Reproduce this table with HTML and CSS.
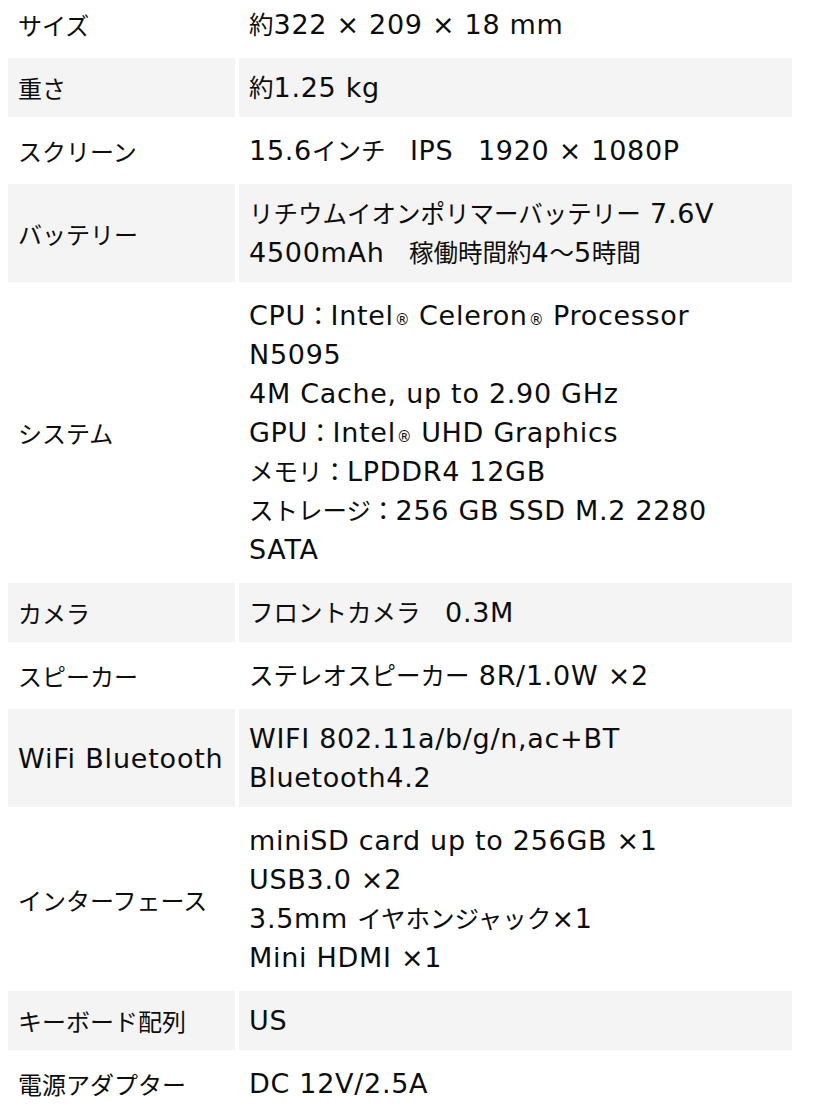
FILE: index.html
```html
<!DOCTYPE html>
<html lang="ja">
<head>
<meta charset="utf-8">
<title>仕様</title>
<link rel="stylesheet" href="styles.css">
</head>
<body>
<table class="spec">
  <colgroup><col class="c-label"><col class="c-value"></colgroup>
  <tbody>
    <tr><th>サイズ</th><td><span class="ja">約</span>322 × 209 × 18 mm</td></tr>
    <tr class="alt"><th>重さ</th><td><span class="ja">約</span>1.25 kg</td></tr>
    <tr><th>スクリーン</th><td>15.6<span class="ja">インチ　</span>IPS<span class="ja">　</span>1920 × 1080P</td></tr>
    <tr class="alt"><th>バッテリー</th><td><span class="ja">リチウムイオンポリマーバッテリー</span> 7.6V<br>4500mAh<span class="ja">　稼働時間約</span>4<span class="ja">〜</span>5<span class="ja">時間</span></td></tr>
    <tr><th>システム</th><td>CPU<span class="ja">：</span>Intel<span class="reg">®</span> Celeron<span class="reg">®</span> Processor<br>N5095<br>4M Cache, up to 2.90 GHz<br>GPU<span class="ja">：</span>Intel<span class="reg">®</span> UHD Graphics<br><span class="ja">メモリ：</span>LPDDR4 12GB<br><span class="ja">ストレージ：</span>256 GB SSD M.2 2280<br>SATA</td></tr>
    <tr class="alt"><th>カメラ</th><td><span class="ja">フロントカメラ　</span>0.3M</td></tr>
    <tr><th>スピーカー</th><td><span class="ja">ステレオスピーカー</span> 8R/1.0W ×2</td></tr>
    <tr class="alt"><th class="en">WiFi Bluetooth</th><td>WIFI 802.11a/b/g/n,ac+BT<br>Bluetooth4.2</td></tr>
    <tr><th>インターフェース</th><td>miniSD card up to 256GB ×1<br>USB3.0 ×2<br>3.5mm <span class="ja">イヤホンジャック</span>×1<br>Mini HDMI ×1</td></tr>
    <tr class="alt"><th>キーボード配列</th><td>US</td></tr>
    <tr><th>電源アダプター</th><td>DC 12V/2.5A</td></tr>
  </tbody>
</table>
</body>
</html>
```

FILE: styles.css
```css
html, body {
  margin: 0;
  padding: 0;
  background: #ffffff;
}

.spec {
  margin: -9px 0 0 4px;
  width: 792px;
  table-layout: fixed;
  border-collapse: separate;
  border-spacing: 4px;
  color: #0d0d0d;
}

.c-label { width: 227px; }

.spec th,
.spec td {
  padding: 10px 10px;
  height: 39px;
  text-align: left;
  vertical-align: middle;
  line-height: 39px;
  font-weight: normal;
}

.spec th {
  font-family: "Noto Sans CJK JP", sans-serif;
  font-size: 24px;
  white-space: nowrap;
}

.spec th.en {
  font-family: "DejaVu Sans", "Noto Sans CJK JP", sans-serif;
  font-size: 27px;
  letter-spacing: 0.8px;
  padding-right: 0;
}

.spec td {
  font-family: "DejaVu Sans", "Noto Sans CJK JP", sans-serif;
  font-size: 27px;
  letter-spacing: 0.7px;
}

.spec .ja {
  font-family: "Noto Sans CJK JP", sans-serif;
  font-size: 24.5px;
  line-height: 1;
  letter-spacing: 0;
}

.spec .reg {
  font-size: 15px;
  line-height: 1;
  letter-spacing: 0;
  margin-left: 1px;
}

.spec tr.alt th,
.spec tr.alt td {
  background: #f4f4f4;
}
```
